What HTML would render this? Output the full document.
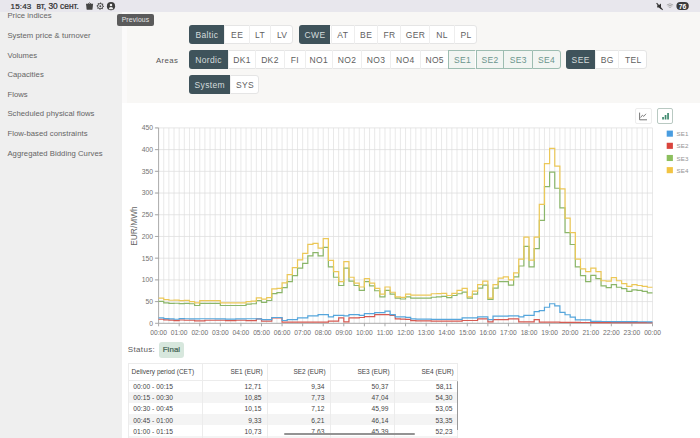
<!DOCTYPE html>
<html><head><meta charset="utf-8">
<style>
*{margin:0;padding:0;box-sizing:border-box}
html,body{width:700px;height:438px;overflow:hidden;background:#fff;font-family:"Liberation Sans",sans-serif}
.abs{position:absolute}
#sb{position:absolute;left:0;top:0;width:700px;height:12px;background:#e8e7ed}
#side{position:absolute;left:0;top:12px;width:121.5px;height:426px;background:#efefef}
.si{position:absolute;left:7.4px;font-size:7.7px;line-height:9px;color:#646464;white-space:nowrap;letter-spacing:0.05px}
#top{position:absolute;left:121.5px;top:12px;width:578.5px;height:90.8px;background:#f8f7f5}
#strip{position:absolute;left:121.5px;top:12px;width:5.5px;height:90.8px;background:#fbfafa}
.grp{position:absolute;background:#fff;border:1px solid #e5e5e5;border-radius:3px}
.b{position:absolute;font-size:8.5px;letter-spacing:0.35px;color:#606060;display:flex;align-items:center;justify-content:center;border-left:1px solid #eeeeee;white-space:nowrap;padding-top:1.2px;padding-left:0.4px}
.b.first{border-left:none;border-radius:3px 0 0 3px}
.b.last{border-radius:0 3px 3px 0}
.b.d{background:#3f535b;color:#d5dcdd}
.b.s{background:#f2f5f2;color:#6a948c;border:1px solid #9dbdb1;border-right:none}
.b.s.last{border-right:1px solid #9dbdb1}
#areas{position:absolute;left:155.9px;top:55.8px;font-size:7.8px;letter-spacing:0.4px;color:#555;line-height:9px}
#tip{position:absolute;left:117.2px;top:13.7px;width:36.6px;height:12.4px;background:#5b5b5b;border-radius:2px;color:#e6e6e6;font-size:6.8px;letter-spacing:0.15px;display:flex;align-items:center;justify-content:center}
#chart{position:absolute;left:0;top:0;width:700px;height:438px}
#chart text{font-family:"Liberation Sans",sans-serif}
.ib{position:absolute;top:108.1px;width:16.5px;height:15.5px;border-radius:2px;background:#fff}
#status{position:absolute;left:127.8px;top:345.3px;font-size:8px;letter-spacing:0.35px;color:#5a5a5a;line-height:9px}
#final{position:absolute;left:158.9px;top:342.4px;width:25.1px;height:15.2px;background:#d7e7dd;border-radius:3px;color:#3e5f50;font-size:7.9px;-webkit-text-stroke:0.2px #3e5f50;display:flex;align-items:center;justify-content:center;letter-spacing:0.1px}
#tbl{position:absolute;left:127.5px;top:363.2px;width:330.5px;height:80px;border:1px solid #ececec;border-bottom:none}
.tr{position:absolute;left:128px;width:329.5px}
.tr.g{background:#f4f4f4}
.td{position:absolute;font-size:6.65px;line-height:11.15px;color:#444;white-space:nowrap;letter-spacing:0.05px}
.th{position:absolute;top:367px;font-size:6.5px;line-height:9px;color:#444;white-space:nowrap}
.vl{position:absolute;top:363.2px;width:1px;height:80px;background:#ececec}
#hdrline{position:absolute;left:127.5px;top:379.6px;width:330.5px;height:1px;background:#ececec}
</style></head><body>
<div id="side">
<div class="si" style="top:-0.9px">Price indices</div>
<div class="si" style="top:19.2px">System price &amp; turnover</div>
<div class="si" style="top:38.5px">Volumes</div>
<div class="si" style="top:58.1px">Capacities</div>
<div class="si" style="top:77.6px">Flows</div>
<div class="si" style="top:97.4px">Scheduled physical flows</div>
<div class="si" style="top:117.2px">Flow-based constraints</div>
<div class="si" style="top:136.8px">Aggregated Bidding Curves</div>
</div>
<div id="top"></div>
<div id="strip"></div>
<div id="areas">Areas</div>
<div class="grp" style="left:189px;top:24.8px;width:103.9px;height:19.2px"></div>
<div class="b d first" style="left:189px;top:24.8px;width:35.4px;height:19.2px">Baltic</div>
<div class="b" style="left:224.4px;top:24.8px;width:24.1px;height:19.2px">EE</div>
<div class="b" style="left:248.5px;top:24.8px;width:21.5px;height:19.2px">LT</div>
<div class="b last" style="left:270px;top:24.8px;width:22.9px;height:19.2px">LV</div>
<div class="grp" style="left:299.1px;top:24.8px;width:178.2px;height:19.2px"></div>
<div class="b d first" style="left:299.1px;top:24.8px;width:31.4px;height:19.2px">CWE</div>
<div class="b" style="left:330.5px;top:24.8px;width:23.1px;height:19.2px">AT</div>
<div class="b" style="left:353.6px;top:24.8px;width:23.7px;height:19.2px">BE</div>
<div class="b" style="left:377.3px;top:24.8px;width:23.1px;height:19.2px">FR</div>
<div class="b" style="left:400.4px;top:24.8px;width:28.9px;height:19.2px">GER</div>
<div class="b" style="left:429.3px;top:24.8px;width:24.3px;height:19.2px">NL</div>
<div class="b last" style="left:453.6px;top:24.8px;width:23.7px;height:19.2px">PL</div>
<div class="grp" style="left:189px;top:50.2px;width:371.9px;height:19.2px"></div>
<div class="b d first" style="left:189px;top:50.2px;width:38.9px;height:19.2px">Nordic</div>
<div class="b" style="left:227.9px;top:50.2px;width:27.0px;height:19.2px">DK1</div>
<div class="b" style="left:254.9px;top:50.2px;width:28.7px;height:19.2px">DK2</div>
<div class="b" style="left:283.6px;top:50.2px;width:21.0px;height:19.2px">FI</div>
<div class="b" style="left:304.6px;top:50.2px;width:27.0px;height:19.2px">NO1</div>
<div class="b" style="left:331.6px;top:50.2px;width:29.6px;height:19.2px">NO2</div>
<div class="b" style="left:361.2px;top:50.2px;width:28.3px;height:19.2px">NO3</div>
<div class="b" style="left:389.5px;top:50.2px;width:30.1px;height:19.2px">NO4</div>
<div class="b" style="left:419.6px;top:50.2px;width:28.8px;height:19.2px">NO5</div>
<div class="b s" style="left:448.4px;top:50.2px;width:27.1px;height:19.2px">SE1</div>
<div class="b s" style="left:475.5px;top:50.2px;width:27.8px;height:19.2px">SE2</div>
<div class="b s" style="left:503.3px;top:50.2px;width:28.5px;height:19.2px">SE3</div>
<div class="b s last" style="left:531.8px;top:50.2px;width:29.1px;height:19.2px">SE4</div>
<div class="grp" style="left:566px;top:50.2px;width:81.1px;height:19.2px"></div>
<div class="b d first" style="left:566px;top:50.2px;width:28.9px;height:19.2px">SEE</div>
<div class="b" style="left:594.9px;top:50.2px;width:23.3px;height:19.2px">BG</div>
<div class="b last" style="left:618.2px;top:50.2px;width:28.9px;height:19.2px">TEL</div>
<div class="grp" style="left:189px;top:75.1px;width:69.5px;height:19.2px"></div>
<div class="b d first" style="left:189px;top:75.1px;width:41.2px;height:19.2px">System</div>
<div class="b last" style="left:230.2px;top:75.1px;width:28.3px;height:19.2px">SYS</div>
<div class="ib" style="left:635.3px;border:1px solid #ededed">
<svg width="14" height="13.5" viewBox="0 0 14 13.5" style="position:absolute;left:0;top:0"><path d="M3.6,3.6V10.8H11" stroke="#666" stroke-width="0.9" fill="none"/><path d="M4.6,8.6L6.4,6.2L7.8,7.4L10,4.8" stroke="#666" stroke-width="0.8" fill="none"/></svg>
</div>
<div class="ib" style="left:656.9px;border:1px solid #b9c9c2">
<svg width="14.5" height="13.5" viewBox="0 0 14.5 13.5" style="position:absolute;left:0;top:0"><rect x="4.2" y="8" width="1.7" height="2.5" fill="#3f8a6f"/><rect x="6.7" y="6" width="1.7" height="4.5" fill="#3f8a6f"/><rect x="9.2" y="4" width="1.7" height="6.5" fill="#3f8a6f"/></svg>
</div>
<svg id="chart" width="700" height="438" viewBox="0 0 700 438">
<path d="M163.74,127.91V323.3M168.89,127.91V323.3M174.03,127.91V323.3M179.18,127.91V323.3M184.32,127.91V323.3M189.47,127.91V323.3M194.61,127.91V323.3M199.76,127.91V323.3M204.90,127.91V323.3M210.05,127.91V323.3M215.19,127.91V323.3M220.34,127.91V323.3M225.48,127.91V323.3M230.63,127.91V323.3M235.77,127.91V323.3M240.92,127.91V323.3M246.06,127.91V323.3M251.21,127.91V323.3M256.35,127.91V323.3M261.50,127.91V323.3M266.64,127.91V323.3M271.79,127.91V323.3M276.93,127.91V323.3M282.07,127.91V323.3M287.22,127.91V323.3M292.36,127.91V323.3M297.51,127.91V323.3M302.65,127.91V323.3M307.80,127.91V323.3M312.94,127.91V323.3M318.09,127.91V323.3M323.23,127.91V323.3M328.38,127.91V323.3M333.52,127.91V323.3M338.67,127.91V323.3M343.81,127.91V323.3M348.96,127.91V323.3M354.10,127.91V323.3M359.25,127.91V323.3M364.39,127.91V323.3M369.54,127.91V323.3M374.68,127.91V323.3M379.83,127.91V323.3M384.97,127.91V323.3M390.12,127.91V323.3M395.26,127.91V323.3M400.41,127.91V323.3M405.55,127.91V323.3M410.69,127.91V323.3M415.84,127.91V323.3M420.98,127.91V323.3M426.13,127.91V323.3M431.27,127.91V323.3M436.42,127.91V323.3M441.56,127.91V323.3M446.71,127.91V323.3M451.85,127.91V323.3M457.00,127.91V323.3M462.14,127.91V323.3M467.29,127.91V323.3M472.43,127.91V323.3M477.58,127.91V323.3M482.72,127.91V323.3M487.87,127.91V323.3M493.01,127.91V323.3M498.16,127.91V323.3M503.30,127.91V323.3M508.45,127.91V323.3M513.59,127.91V323.3M518.74,127.91V323.3M523.88,127.91V323.3M529.02,127.91V323.3M534.17,127.91V323.3M539.31,127.91V323.3M544.46,127.91V323.3M549.60,127.91V323.3M554.75,127.91V323.3M559.89,127.91V323.3M565.04,127.91V323.3M570.18,127.91V323.3M575.33,127.91V323.3M580.47,127.91V323.3M585.62,127.91V323.3M590.76,127.91V323.3M595.91,127.91V323.3M601.05,127.91V323.3M606.20,127.91V323.3M611.34,127.91V323.3M616.49,127.91V323.3M621.63,127.91V323.3M626.78,127.91V323.3M631.92,127.91V323.3M637.07,127.91V323.3M642.21,127.91V323.3M647.36,127.91V323.3M652.50,127.91V323.3" stroke="#e1e1e1" stroke-width="0.75" fill="none"/>
<path d="M154.6,301.59H652.5M154.6,279.88H652.5M154.6,258.17H652.5M154.6,236.46H652.5M154.6,214.75H652.5M154.6,193.04H652.5M154.6,171.33H652.5M154.6,149.62H652.5M154.6,127.91H652.5" stroke="#dedede" stroke-width="0.75" fill="none"/>
<path d="M155.1,323.30H158.6M155.1,301.59H158.6M155.1,279.88H158.6M155.1,258.17H158.6M155.1,236.46H158.6M155.1,214.75H158.6M155.1,193.04H158.6M155.1,171.33H158.6M155.1,149.62H158.6M155.1,127.91H158.6M158.60,323.3V326.3M179.18,323.3V326.3M199.76,323.3V326.3M220.34,323.3V326.3M240.92,323.3V326.3M261.50,323.3V326.3M282.07,323.3V326.3M302.65,323.3V326.3M323.23,323.3V326.3M343.81,323.3V326.3M364.39,323.3V326.3M384.97,323.3V326.3M405.55,323.3V326.3M426.13,323.3V326.3M446.71,323.3V326.3M467.29,323.3V326.3M487.87,323.3V326.3M508.45,323.3V326.3M529.02,323.3V326.3M549.60,323.3V326.3M570.18,323.3V326.3M590.76,323.3V326.3M611.34,323.3V326.3M631.92,323.3V326.3M652.50,323.3V326.3" stroke="#a0a0a0" stroke-width="0.9" fill="none"/>
<path d="M158.6,127.91V323.3H652.5" stroke="#a0a0a0" stroke-width="0.9" fill="none"/>
<text x="153" y="325.70" text-anchor="end" font-size="6.8" fill="#737373">0</text>
<text x="153" y="303.99" text-anchor="end" font-size="6.8" fill="#737373">50</text>
<text x="153" y="282.28" text-anchor="end" font-size="6.8" fill="#737373">100</text>
<text x="153" y="260.57" text-anchor="end" font-size="6.8" fill="#737373">150</text>
<text x="153" y="238.86" text-anchor="end" font-size="6.8" fill="#737373">200</text>
<text x="153" y="217.15" text-anchor="end" font-size="6.8" fill="#737373">250</text>
<text x="153" y="195.44" text-anchor="end" font-size="6.8" fill="#737373">300</text>
<text x="153" y="173.73" text-anchor="end" font-size="6.8" fill="#737373">350</text>
<text x="153" y="152.02" text-anchor="end" font-size="6.8" fill="#737373">400</text>
<text x="153" y="130.31" text-anchor="end" font-size="6.8" fill="#737373">450</text>
<text x="158.60" y="334.8" text-anchor="middle" font-size="6.7" fill="#6e6e6e">00:00</text>
<text x="179.18" y="334.8" text-anchor="middle" font-size="6.7" fill="#6e6e6e">01:00</text>
<text x="199.76" y="334.8" text-anchor="middle" font-size="6.7" fill="#6e6e6e">02:00</text>
<text x="220.34" y="334.8" text-anchor="middle" font-size="6.7" fill="#6e6e6e">03:00</text>
<text x="240.92" y="334.8" text-anchor="middle" font-size="6.7" fill="#6e6e6e">04:00</text>
<text x="261.50" y="334.8" text-anchor="middle" font-size="6.7" fill="#6e6e6e">05:00</text>
<text x="282.07" y="334.8" text-anchor="middle" font-size="6.7" fill="#6e6e6e">06:00</text>
<text x="302.65" y="334.8" text-anchor="middle" font-size="6.7" fill="#6e6e6e">07:00</text>
<text x="323.23" y="334.8" text-anchor="middle" font-size="6.7" fill="#6e6e6e">08:00</text>
<text x="343.81" y="334.8" text-anchor="middle" font-size="6.7" fill="#6e6e6e">09:00</text>
<text x="364.39" y="334.8" text-anchor="middle" font-size="6.7" fill="#6e6e6e">10:00</text>
<text x="384.97" y="334.8" text-anchor="middle" font-size="6.7" fill="#6e6e6e">11:00</text>
<text x="405.55" y="334.8" text-anchor="middle" font-size="6.7" fill="#6e6e6e">12:00</text>
<text x="426.13" y="334.8" text-anchor="middle" font-size="6.7" fill="#6e6e6e">13:00</text>
<text x="446.71" y="334.8" text-anchor="middle" font-size="6.7" fill="#6e6e6e">14:00</text>
<text x="467.29" y="334.8" text-anchor="middle" font-size="6.7" fill="#6e6e6e">15:00</text>
<text x="487.87" y="334.8" text-anchor="middle" font-size="6.7" fill="#6e6e6e">16:00</text>
<text x="508.45" y="334.8" text-anchor="middle" font-size="6.7" fill="#6e6e6e">17:00</text>
<text x="529.02" y="334.8" text-anchor="middle" font-size="6.7" fill="#6e6e6e">18:00</text>
<text x="549.60" y="334.8" text-anchor="middle" font-size="6.7" fill="#6e6e6e">19:00</text>
<text x="570.18" y="334.8" text-anchor="middle" font-size="6.7" fill="#6e6e6e">20:00</text>
<text x="590.76" y="334.8" text-anchor="middle" font-size="6.7" fill="#6e6e6e">21:00</text>
<text x="611.34" y="334.8" text-anchor="middle" font-size="6.7" fill="#6e6e6e">22:00</text>
<text x="631.92" y="334.8" text-anchor="middle" font-size="6.7" fill="#6e6e6e">23:00</text>
<text x="652.50" y="334.8" text-anchor="middle" font-size="6.7" fill="#6e6e6e">00:00</text>
<text transform="translate(136.6,226) rotate(-90)" text-anchor="middle" font-size="8.4" fill="#666">EUR/MWh</text>
<path d="M158.60,319.24H163.74V319.94H168.89V320.21H174.03V320.60H179.18V319.99H184.32V320.26H189.47V320.26H194.61V320.91H199.76V320.91H204.90V320.26H210.05V320.26H215.19V320.26H220.34V320.26H225.48V320.69H230.63V320.69H235.77V320.26H240.92V320.26H246.06V320.69H251.21V320.69H256.35V318.96H261.50V321.13H266.64V321.13H271.79V317.87H276.93V317.87H282.07V322.21H287.22V322.21H292.36V322.21H297.51V322.21H302.65V322.21H307.80V322.21H312.94V322.21H318.09V322.21H323.23V322.21H328.38V321.13H333.52V321.13H338.67V317.87H343.81V321.78H348.96V317.87H354.10V317.87H359.25V317.48H364.39V316.57H369.54V316.57H374.68V314.62H379.83V314.62H384.97V314.62H390.12V315.31H395.26V318.96H400.41V319.18H405.55V319.39H410.69V320.69H415.84V320.91H420.98V320.91H426.13V320.91H431.27V321.13H436.42V321.13H441.56V321.13H446.71V321.13H451.85V321.13H457.00V321.13H462.14V320.52H467.29V320.52H472.43V320.52H477.58V318.96H482.72V318.96H487.87V321.78H493.01V319.61H498.16V319.61H503.30V319.61H508.45V318.96H513.59V318.96H518.74V321.78H523.88V321.78H529.02V321.78H534.17V319.61H539.31V322.21H544.46V322.21H549.60V322.21H554.75V322.21H559.89V322.34H565.04V322.34H570.18V322.43H575.33V322.43H580.47V322.52H585.62V322.52H590.76V322.61H595.91V322.61H601.05V322.65H606.20V322.65H611.34V322.65H616.49V322.65H621.63V322.65H626.78V322.65H631.92V322.65H637.07V322.65H642.21V322.65H647.36V322.65H652.50" stroke="#d65a52" stroke-width="1.2" fill="none" stroke-linejoin="miter"/>
<path d="M158.60,317.78H163.74V318.59H168.89V318.89H174.03V319.25H179.18V318.64H184.32V318.74H189.47V318.96H194.61V318.96H199.76V318.74H204.90V318.74H210.05V318.74H215.19V318.96H220.34V318.96H225.48V319.18H230.63V319.18H235.77V318.96H240.92V318.96H246.06V318.74H251.21V318.74H256.35V318.96H261.50V319.61H266.64V319.61H271.79V317.48H276.93V317.48H282.07V320.52H287.22V319.61H292.36V319.61H297.51V317.87H302.65V317.87H307.80V315.79H312.94V315.79H318.09V314.62H323.23V314.62H328.38V316.87H333.52V315.31H338.67V315.31H343.81V315.79H348.96V314.62H354.10V314.62H359.25V315.31H364.39V313.57H369.54V313.57H374.68V312.53H379.83V312.53H384.97V311.14H390.12V314.62H395.26V316.87H400.41V316.87H405.55V317.44H410.69V318.96H415.84V319.18H420.98V319.18H426.13V319.18H431.27V319.39H436.42V319.39H441.56V319.39H446.71V319.39H451.85V319.39H457.00V319.39H462.14V317.87H467.29V317.87H472.43V317.87H477.58V316.87H482.72V316.87H487.87V319.61H493.01V316.14H498.16V316.14H503.30V316.14H508.45V315.79H513.59V315.79H518.74V316.87H523.88V315.31H529.02V315.31H534.17V311.58H539.31V310.71H544.46V307.23H549.60V303.76H554.75V305.93H559.89V312.44H565.04V314.75H570.18V317.05H575.33V319.91H580.47V319.91H585.62V319.91H590.76V321.30H595.91V321.30H601.05V321.48H606.20V321.48H611.34V321.56H616.49V321.56H621.63V321.65H626.78V321.65H631.92V321.65H637.07V321.74H642.21V321.74H647.36V321.78H652.50" stroke="#56a6dc" stroke-width="1.2" fill="none" stroke-linejoin="miter"/>
<path d="M158.60,301.43H163.74V302.88H168.89V303.33H174.03V303.27H179.18V303.59H184.32V303.33H189.47V303.76H194.61V305.50H199.76V303.33H204.90V303.33H210.05V303.33H215.19V303.33H220.34V305.50H225.48V305.50H230.63V305.50H235.77V305.50H240.92V305.50H246.06V304.20H251.21V303.76H256.35V300.72H261.50V302.46H266.64V300.50H271.79V293.56H276.93V292.69H282.07V287.70H287.22V281.62H292.36V275.54H297.51V268.16H302.65V263.38H307.80V255.78H312.94V252.53H318.09V255.78H323.23V247.31H328.38V266.85H333.52V277.27H338.67V285.52H343.81V268.16H348.96V281.18H354.10V285.52H359.25V290.30H364.39V281.62H369.54V285.96H374.68V290.74H379.83V296.81H384.97V290.30H390.12V294.21H395.26V298.12H400.41V298.98H405.55V296.81H410.69V298.12H415.84V298.12H420.98V298.12H426.13V298.12H431.27V297.25H436.42V296.81H441.56V296.38H446.71V297.68H451.85V295.51H457.00V293.77H462.14V292.04H467.29V298.12H472.43V294.21H477.58V288.13H482.72V285.09H487.87V299.42H493.01V288.13H498.16V281.62H503.30V281.62H508.45V285.09H513.59V276.84H518.74V265.99H523.88V246.45H529.02V266.85H534.17V248.62H539.31V220.39H544.46V186.53H549.60V172.20H554.75V188.26H559.89V207.80H565.04V232.55H570.18V244.49H575.33V266.85H580.47V275.54H585.62V281.62H590.76V275.28H595.91V278.58H601.05V285.96H606.20V287.70H611.34V284.66H616.49V287.26H621.63V288.56H626.78V291.39H631.92V289.87H637.07V290.30H642.21V291.39H647.36V292.91H652.50" stroke="#8bb66a" stroke-width="1.2" fill="none" stroke-linejoin="miter"/>
<path d="M158.60,298.07H163.74V299.72H168.89V300.27H174.03V300.14H179.18V300.62H184.32V300.29H189.47V301.59H194.61V302.89H199.76V300.72H204.90V300.72H210.05V300.72H215.19V300.72H220.34V302.89H225.48V302.89H230.63V302.89H235.77V302.89H240.92V302.89H246.06V301.59H251.21V301.16H256.35V297.90H261.50V299.20H266.64V297.68H271.79V288.78H276.93V288.35H282.07V282.92H287.22V274.67H292.36V267.72H297.51V259.91H302.65V253.39H307.80V244.28H312.94V243.41H318.09V248.18H323.23V238.63H328.38V260.34H333.52V271.63H338.67V281.62H343.81V261.64H348.96V277.27H354.10V283.09H359.25V287.00H364.39V278.58H369.54V283.09H374.68V288.35H379.83V294.21H384.97V287.00H390.12V292.25H395.26V296.81H400.41V297.47H405.55V294.21H410.69V295.08H415.84V295.08H420.98V295.08H426.13V295.08H431.27V293.77H436.42V293.56H441.56V293.34H446.71V295.51H451.85V293.34H457.00V290.30H462.14V288.35H467.29V296.81H472.43V291.17H477.58V284.66H482.72V281.18H487.87V298.12H493.01V284.66H498.16V278.14H503.30V276.84H508.45V279.88H513.59V272.93H518.74V259.04H523.88V237.07H529.02V260.08H534.17V237.07H539.31V204.33H544.46V163.69H549.60V148.32H554.75V166.12H559.89V188.92H565.04V218.22H570.18V232.55H575.33V259.04H580.47V268.81H585.62V271.63H590.76V268.16H595.91V271.63H601.05V280.75H606.20V281.18H611.34V277.71H616.49V280.75H621.63V283.53H626.78V286.39H631.92V284.66H637.07V285.52H642.21V286.39H647.36V287.26H652.50" stroke="#ecc858" stroke-width="1.2" fill="none" stroke-linejoin="miter"/>
<rect x="666.7" y="130.60" width="6.2" height="6.1" fill="#4a9de0"/>
<text x="676.6" y="136.20" font-size="6.2" fill="#949494" letter-spacing="0.1">SE1</text>
<rect x="666.7" y="142.77" width="6.2" height="6.1" fill="#d9443c"/>
<text x="676.6" y="148.37" font-size="6.2" fill="#949494" letter-spacing="0.1">SE2</text>
<rect x="666.7" y="154.94" width="6.2" height="6.1" fill="#8cbf5e"/>
<text x="676.6" y="160.54" font-size="6.2" fill="#949494" letter-spacing="0.1">SE3</text>
<rect x="666.7" y="167.11" width="6.2" height="6.1" fill="#f2c443"/>
<text x="676.6" y="172.71" font-size="6.2" fill="#949494" letter-spacing="0.1">SE4</text>
</svg>
<div id="status">Status:</div>
<div id="final">Final</div>
<div class="td" style="left:133.3px;top:381.10px">00:00 - 00:15</div>
<div class="td r" style="right:438.6px;top:381.10px">12,71</div>
<div class="td r" style="right:375.6px;top:381.10px">9,34</div>
<div class="td r" style="right:311.6px;top:381.10px">50,37</div>
<div class="td r" style="right:247.6px;top:381.10px">58,11</div>
<div class="tr g" style="top:391.75px;height:11.15px"></div>
<div class="td" style="left:133.3px;top:392.25px">00:15 - 00:30</div>
<div class="td r" style="right:438.6px;top:392.25px">10,85</div>
<div class="td r" style="right:375.6px;top:392.25px">7,73</div>
<div class="td r" style="right:311.6px;top:392.25px">47,04</div>
<div class="td r" style="right:247.6px;top:392.25px">54,30</div>
<div class="td" style="left:133.3px;top:403.40px">00:30 - 00:45</div>
<div class="td r" style="right:438.6px;top:403.40px">10,15</div>
<div class="td r" style="right:375.6px;top:403.40px">7,12</div>
<div class="td r" style="right:311.6px;top:403.40px">45,99</div>
<div class="td r" style="right:247.6px;top:403.40px">53,05</div>
<div class="tr g" style="top:414.05px;height:11.15px"></div>
<div class="td" style="left:133.3px;top:414.55px">00:45 - 01:00</div>
<div class="td r" style="right:438.6px;top:414.55px">9,33</div>
<div class="td r" style="right:375.6px;top:414.55px">6,21</div>
<div class="td r" style="right:311.6px;top:414.55px">46,14</div>
<div class="td r" style="right:247.6px;top:414.55px">53,35</div>
<div class="td" style="left:133.3px;top:425.70px">01:00 - 01:15</div>
<div class="td r" style="right:438.6px;top:425.70px">10,73</div>
<div class="td r" style="right:375.6px;top:425.70px">7,63</div>
<div class="td r" style="right:311.6px;top:425.70px">45,39</div>
<div class="td r" style="right:247.6px;top:425.70px">52,23</div>
<div class="tr g" style="top:436.35px;height:11.15px"></div>
<div class="td" style="left:133.3px;top:436.85px">01:15 - 01:30</div>
<div class="td r" style="right:438.6px;top:436.85px">10,50</div>
<div class="td r" style="right:375.6px;top:436.85px">7,00</div>
<div class="td r" style="right:311.6px;top:436.85px">46,00</div>
<div class="td r" style="right:247.6px;top:436.85px">53,00</div>
<div class="th" style="left:131.6px">Delivery period (CET)</div>
<div class="th" style="right:437.4px">SE1 (EUR)</div>
<div class="th" style="right:374.4px">SE2 (EUR)</div>
<div class="th" style="right:310.4px">SE3 (EUR)</div>
<div class="th" style="right:246.4px">SE4 (EUR)</div>
<div class="vl" style="left:201.5px"></div>
<div class="vl" style="left:267px"></div>
<div class="vl" style="left:330px"></div>
<div class="vl" style="left:394px"></div>
<div id="tbl"></div>
<div id="hdrline"></div>
<div class="abs" style="left:456.5px;top:381px;width:1.6px;height:49px;background:#9a9a9a;border-radius:1px"></div>
<div class="abs" style="left:284.3px;top:432.9px;width:131px;height:2.1px;background:#939393;border-radius:1px"></div>
<div id="sb">
<div class="abs" style="left:10.6px;top:1.9px;font-size:8.1px;color:#2e2e2e;line-height:9px;letter-spacing:0.1px;-webkit-text-stroke:0.22px #2e2e2e">15:43</div>
<div class="abs" style="left:36.6px;top:1.9px;font-size:8.4px;color:#2e2e2e;line-height:9px;-webkit-text-stroke:0.22px #2e2e2e">вт, 30 сент.</div>
<svg class="abs" style="left:84px;top:1px" width="34" height="10" viewBox="0 0 34 10">
<path d="M2,2.8H9.1L8.5,8.2Q8.3,8.7 7.8,8.7H3.3Q2.8,8.7 2.6,8.2Z" fill="#454545"/><path d="M4,3Q5.55,0.6 7.1,3" stroke="#454545" stroke-width="0.8" fill="none"/>
<path d="M20.00,5.15L19.93,5.87L18.98,6.26L18.71,6.76L18.92,7.77L18.36,8.23L17.41,7.83L16.87,7.99L16.30,8.85L15.58,8.78L15.19,7.83L14.69,7.56L13.68,7.77L13.22,7.21L13.62,6.26L13.46,5.72L12.60,5.15L12.67,4.43L13.62,4.04L13.89,3.54L13.68,2.53L14.24,2.07L15.19,2.47L15.73,2.31L16.30,1.45L17.02,1.52L17.41,2.47L17.91,2.74L18.92,2.53L19.38,3.09L18.98,4.04L19.14,4.58Z" fill="#4a4a4a"/><circle cx="16.3" cy="5.15" r="2.1" fill="#e8e7ed"/><circle cx="16.3" cy="5.15" r="1.0" fill="#4a4a4a"/>
<circle cx="27" cy="5.15" r="4.1" fill="#3d3d3d"/><circle cx="27" cy="4.0" r="1.25" fill="#f0f0f0"/><path d="M24.8,8.2Q24.9,6 27,6Q29.1,6 29.2,8.2Z" fill="#f0f0f0"/>
</svg>
<svg class="abs" style="left:655px;top:1px" width="45" height="11" viewBox="0 0 45 11">
<path d="M2.2,4.2H3.8L6,2.4V8.2L3.8,6.6H2.2Z" fill="#333"/><path d="M1.6,2.2L7.6,8.8" stroke="#333" stroke-width="1.1"/>
<path d="M11.8,4Q15,1.5 18.2,4M12.8,5.2Q15,3.5 17.2,5.2M13.9,6.4Q15,5.6 16.1,6.4" stroke="#999" stroke-width="0.8" fill="none"/>
<rect x="21.4" y="0.9" width="12.4" height="8" rx="4" fill="#3a3a3a"/>
<text x="27.6" y="7.6" text-anchor="middle" font-size="6.8" font-weight="bold" fill="#fff" font-family="Liberation Sans">76</text>
</svg>
</div>
<div id="tip">Previous</div>
</body></html>
